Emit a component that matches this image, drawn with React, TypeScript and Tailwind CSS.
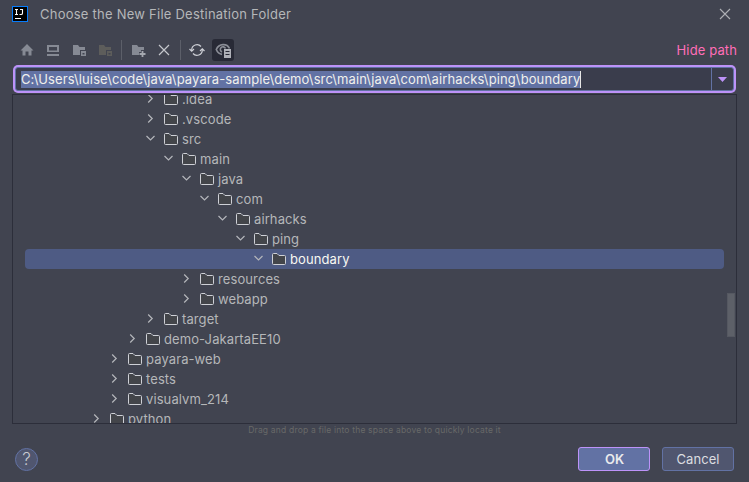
import type { ReactNode } from "react";

type Row = { level: number; name: string; open?: boolean; selected?: boolean };

const rows: Row[] = [
  { level: 3, name: ".idea" },
  { level: 3, name: ".vscode" },
  { level: 3, name: "src", open: true },
  { level: 4, name: "main", open: true },
  { level: 5, name: "java", open: true },
  { level: 6, name: "com", open: true },
  { level: 7, name: "airhacks", open: true },
  { level: 8, name: "ping", open: true },
  { level: 9, name: "boundary", open: true, selected: true },
  { level: 5, name: "resources" },
  { level: 5, name: "webapp" },
  { level: 3, name: "target" },
  { level: 2, name: "demo-JakartaEE10" },
  { level: 1, name: "payara-web" },
  { level: 1, name: "tests" },
  { level: 1, name: "visualvm_214" },
  { level: 0, name: "python" },
];

function Icon({ children, className = "" }: { children: ReactNode; className?: string }) {
  return (
    <svg width="16" height="16" viewBox="0 0 16 16" fill="none" className={`shrink-0 ${className}`}>
      {children}
    </svg>
  );
}

function Chevron({ open }: { open?: boolean }) {
  return (
    <Icon>
      <path
        d={open ? "M4.5 5L8.5 9L12.5 5" : "M6.2 3.5L10.2 7.5L6.2 11.5"}
        stroke="#b4b6bb"
        strokeWidth="1.2"
      />
    </Icon>
  );
}

function Folder() {
  return (
    <Icon>
      <path
        d="M1.5 3.5Q1.5 2.5 2.5 2.5H6L8 4.5H13.5Q14.5 4.5 14.5 5.5V12.5Q14.5 13.5 13.5 13.5H2.5Q1.5 13.5 1.5 12.5Z"
        fill="#43454a"
        stroke="#ced0d6"
      />
    </Icon>
  );
}

function SmallFolder({ color }: { color: string }) {
  return (
    <Icon>
      <path d="M1 3H6L7.5 5H13V8H8V13H1Z" fill={color} />
      <path fillRule="evenodd" d="M9 9H14V14H9ZM10.5 11V12.5H12.5V11Z" fill={color} />
    </Icon>
  );
}

function Toolbar() {
  return (
    <div className="flex h-6 items-center pl-[19px] pr-[12px]">
      <Icon>
        <path d="M8 2L14.5 8.5H12.5V13.5H9.5V9.5H6.5V13.5H3.5V8.5H1.5Z" fill="#868a94" />
      </Icon>
      <Icon className="ml-[10px]">
        <path fillRule="evenodd" d="M2 3H14V10H2ZM4 5V8.5H12V5ZM2 12H14V14H2Z" fill="#868a94" />
      </Icon>
      <span className="ml-[11px] flex"><SmallFolder color="#868a94" /></span>
      <span className="ml-[10px] flex"><SmallFolder color="#5d5d5b" /></span>
      <span className="ml-[7px] h-5 w-px bg-[#5c5f69]" />
      <Icon className="ml-[9px]">
        <path d="M1 3H6L7.5 5H13V8H10V10H8V13H1Z" fill="#868a94" />
        <path d="M11.5 9V15M8.5 12H14.5" stroke="#a5a8af" strokeWidth="1.8" />
      </Icon>
      <Icon className="ml-[9px]">
        <path d="M3 3L13 13M13 3L3 13" stroke="#c5c7cc" strokeWidth="1.2" />
      </Icon>
      <span className="ml-[8px] h-5 w-px bg-[#5c5f69]" />
      <Icon className="ml-[8px]">
        <path d="M2.7 9V8A5.3 5.3 0 0 1 12 4.5M13.3 7V8A5.3 5.3 0 0 1 4 11.5" stroke="#ced0d6" strokeWidth="1.2" />
        <path d="M.5 7L2.7 9.2L5 7M11 9L13.3 6.8L15.5 9" stroke="#ced0d6" strokeWidth="1.2" />
      </Icon>
      <span className="ml-[7px] flex h-[22px] w-[22px] items-center justify-center rounded-[3px] bg-[#282a36]">
        <Icon>
          <path d="M7 12.3C4 12 2.2 9.8 1.3 7.5C4 1.2 12 1.2 14.5 6.5" stroke="#8a8d96" strokeWidth="1.7" />
          <path d="M7 10A2.7 2.7 0 1 1 10.5 6.5" stroke="#8a8d96" strokeWidth="1.6" />
          <path fillRule="evenodd" d="M9 7H16V16H9ZM10.5 9V10H14.5V9ZM10.5 12V13H14.5V12Z" fill="#afb1b8" />
        </Icon>
      </span>
      <span className="ml-auto tracking-[0.12px] text-[#ff6eb8]">Hide path</span>
    </div>
  );
}

export default function App() {
  return (
    <div className="flex h-[482px] w-[749px] flex-col overflow-hidden bg-[#414450] font-['Inter','Liberation_Sans',sans-serif] text-[13px] leading-5 text-[#b5b7b9]">
      <header className="flex h-[38px] items-start pl-3 pr-[16px] pt-[6px]">
        <svg width="16" height="16" viewBox="0 0 16 16" className="shrink-0">
          <rect width="16" height="16" fill="#087cfa" />
          <rect x="1" y="1" width="14" height="14" fill="#000" />
          <path d="M3 3.5H6M4.5 3.5V8.5M3 8.5H6M8 3.5H10.5V7.2Q10.5 8.5 9 8.5H7.5M3 12.5H9" stroke="#fff" fill="none" strokeWidth="1.1" />
        </svg>
        <h1 className="ml-3 -mt-[2px] tracking-[0.24px]">Choose the New File Destination Folder</h1>
        <Icon className="ml-auto">
          <path d="M3 3L13 13M13 3L3 13" stroke="#aeb0b5" strokeWidth="1.1" />
        </Icon>
      </header>
      <Toolbar />
      <div className="ml-[13px] mt-[3px] flex h-[28px] w-[723px] shrink-0 rounded-[5px] bg-[#bd93f9] p-[2px]">
        <div className="flex flex-1 items-center rounded-[3px] border border-[#6272a4] bg-[#3a3d4c]">
          <span className="ml-[5px] h-[17px] whitespace-nowrap border-r border-[#e6e6e6] bg-[#6272a4] leading-[17px] tracking-[0.11px] text-[#f0f0ec]">
            C:\Users\luise\code\java\payara-sample\demo\src\main\java\com\airhacks\ping\boundary
          </span>
          <span className="ml-auto flex h-full w-[22px] items-center justify-center border-l border-[#6272a4]">
            <svg width="9" height="5" viewBox="0 0 9 5"><path d="M0 0H9L4.5 5Z" fill="#bd93f9" /></svg>
          </span>
        </div>
      </div>
      <main className="ml-3 mt-px flex h-[330px] w-[725px] shrink-0 overflow-hidden border border-[#2c2e3a]">
        <ul className="-mt-[6px] ml-3 w-[699px] shrink-0">
          {rows.map((row) => (
            <li
              key={row.name}
              className={`flex h-5 items-center rounded-[4px] ${row.selected ? "bg-[#4e5b84] text-[#f8f8f2]" : ""}`}
              style={{ paddingLeft: 63 + row.level * 18 }}
            >
              <Chevron open={row.open} />
              <span className="ml-[5px] flex"><Folder /></span>
              <span className="ml-[3px] tracking-[0.1px]">{row.name}</span>
            </li>
          ))}
        </ul>
        <div className="ml-[3px] mt-[198px] h-[44px] w-[8px] shrink-0 border border-[#555861] bg-[#5d6068]" />
      </main>
      <p className="h-3 text-center text-[8.5px] leading-[12px] tracking-[0.19px] text-[#686968]">
        Drag and drop a file into the space above to quickly locate it
      </p>
      <footer className="mt-[11px] flex h-6 items-center pl-[15px] pr-[15px]">
        <button className="flex h-[23px] w-[23px] items-center justify-center rounded-full border border-[#6272a4] bg-[#50566f] text-[17px] font-light leading-none text-[#c9cbd1]">?</button>
        <button className="ml-auto h-6 w-[72px] rounded-[3px] border border-[#bd93f9] bg-[#6272a4] pl-[1px] font-semibold leading-[22px] text-[#e9eaed]">OK</button>
        <button className="ml-3 h-6 w-[72px] rounded-[3px] border border-[#6272a4] bg-[#50566f] leading-[22px] tracking-[0.08px] text-[#dcdde0]">Cancel</button>
      </footer>
    </div>
  );
}
